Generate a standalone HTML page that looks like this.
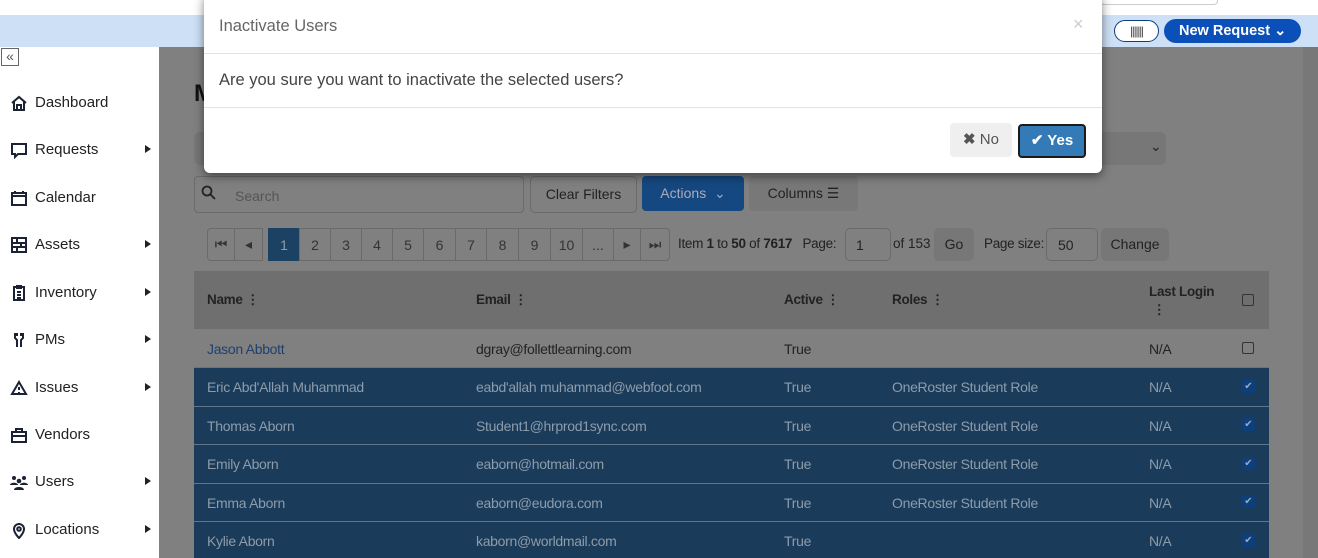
<!DOCTYPE html>
<html><head><style>
*{box-sizing:border-box;margin:0;padding:0}
body{width:1318px;height:558px;overflow:hidden;position:relative;font-family:"Liberation Sans",sans-serif;background:#fff}
.abs{position:absolute}
.side a{position:absolute;left:35px;font-size:15px;color:#222}
.side svg{position:absolute;left:10px;width:18px;height:18px;fill:none;stroke:#1a2233;stroke-width:2}
.side .arr{position:absolute;left:145px;width:0;height:0;border-left:6px solid #222;border-top:4px solid transparent;border-bottom:4px solid transparent}
.main{position:absolute;left:159px;top:47px;width:1159px;height:511px;background:#808080;overflow:hidden}
.pg{position:absolute;top:228px;height:33px;border:1px solid #6a6a6a;background:#808080;font-size:14px;color:#333;display:flex;align-items:center;justify-content:center}
.row{position:absolute;left:194px;width:1075px;font-size:14px;letter-spacing:-0.3px}
.row span{position:absolute}
.sel{background:#1b3b5a;color:#8c9cab;border-top:1px solid #62768a}
.cb{position:absolute;left:1242px;width:12px;height:12px;border:1px solid #333;border-radius:2px}
.cbs{position:absolute;left:1242px;width:13px;height:13px;background:#0d3f7a;border-radius:2px;color:#9ab;font-size:10px;text-align:center;line-height:13px}
</style></head><body>
<div class="abs" style="left:0;top:15px;width:1318px;height:32px;background:#cde0f5"></div>
<div class="abs" style="left:1100px;top:-10px;width:118px;height:15px;border:1px solid #ccc;border-radius:4px;background:#fff"></div>
<div class="abs" style="left:1114px;top:20px;width:45px;height:22px;border:1px solid #0d3f7a;border-radius:11px;background:#fff;font-size:12px;text-align:center;line-height:20px;color:#333;letter-spacing:-1px">||||||</div>
<div class="abs" style="left:1164px;top:19px;width:137px;height:24px;border-radius:12px;background:#0b4fb8;color:#fff;font-weight:bold;font-size:14.5px;line-height:24px;padding-left:15px">New Request &#8964;</div>
<div class="abs" style="left:1px;top:48px;width:18px;height:18px;border:1px solid #666;font-size:14px;line-height:14px;text-align:center;color:#555">«</div>
<div class="side">
<svg style="top:94px" viewBox="0 0 18 18"><path d="M2 9L9 3l7 6M4 8v8h10V8M7 16v-5h4v5"/></svg><a style="top:94px">Dashboard</a>
<svg style="top:141px" viewBox="0 0 18 18"><path d="M2 3h14v10H8l-3 3v-3H2z"/></svg><a style="top:141px">Requests</a><div class="arr" style="top:145px"></div>
<svg style="top:189px" viewBox="0 0 18 18"><path d="M2 4h14v12H2zM2 7h14M5 2v3M13 2v3"/></svg><a style="top:189px">Calendar</a>
<svg style="top:236px" viewBox="0 0 18 18"><path d="M2 2h14v14H2zM2 7h14M2 11h14M7 2v5M11 7v4M7 11v5"/></svg><a style="top:236px">Assets</a><div class="arr" style="top:240px"></div>
<svg style="top:284px" viewBox="0 0 18 18"><path d="M4 3h10v13H4zM7 2h4v2H7zM7 8h4M7 11h4M7 14h4"/></svg><a style="top:284px">Inventory</a><div class="arr" style="top:288px"></div>
<svg style="top:331px" viewBox="0 0 18 18"><path d="M5 2v5l2 2v7M13 2v5l-2 2v7M7 2v3M11 2v3"/></svg><a style="top:331px">PMs</a><div class="arr" style="top:335px"></div>
<svg style="top:379px" viewBox="0 0 18 18"><path d="M9 3L2 15h14zM9 8v3M9 13v1"/></svg><a style="top:379px">Issues</a><div class="arr" style="top:383px"></div>
<svg style="top:426px" viewBox="0 0 18 18"><path d="M2 6h14v10H2zM6 6V3h6v3M2 10h14"/></svg><a style="top:426px">Vendors</a>
<svg style="top:473px;fill:#1a2233;stroke:none" viewBox="0 0 18 18"><circle cx="4" cy="5" r="2"/><circle cx="14" cy="5" r="2"/><circle cx="9" cy="8" r="2.3"/><path d="M0 12c0-3 8-3 8 0zM10 12c0-3 8-3 8 0zM4 17c0-4 10-4 10 0z"/></svg><a style="top:473px">Users</a><div class="arr" style="top:477px"></div>
<svg style="top:521px" viewBox="0 0 18 18"><path d="M9 17s-5-5-5-9a5 5 0 0 1 10 0c0 4-5 9-5 9z"/><circle cx="9" cy="8" r="1.8"/></svg><a style="top:521px">Locations</a><div class="arr" style="top:525px"></div>
</div>
<div class="main"></div>
<div class="abs" style="left:1303px;top:47px;width:15px;height:511px;background:#787878"></div>
<div class="abs" style="left:194px;top:80px;font-size:24px;font-weight:bold;color:#111">M</div>
<div class="abs" style="left:194px;top:132px;width:972px;height:33px;background:#777;border-radius:6px"></div>
<div class="abs" style="left:1150px;top:138px;font-size:14px;color:#222">⌄</div>
<div class="abs" style="left:194px;top:176px;width:330px;height:37px;border:1px solid #6a6a6a;border-radius:4px;font-size:14px;color:#555;padding:11px 0 0 40px">Search</div>
<svg class="abs" style="left:201px;top:185px" width="16" height="16" viewBox="0 0 16 16" fill="none" stroke="#222" stroke-width="1.8"><circle cx="6" cy="6" r="4.5"/><path d="M9.5 9.5L14 14"/></svg>
<div class="abs" style="left:530px;top:176px;width:107px;height:37px;border:1px solid #6a6a6a;border-radius:5px;font-size:14px;color:#222;text-align:center;line-height:35px">Clear Filters</div>
<div class="abs" style="left:642px;top:176px;width:102px;height:35px;background:#154880;border-radius:4px;font-size:14px;color:#aab;text-align:center;line-height:35px">Actions &nbsp;⌄</div>
<div class="abs" style="left:749px;top:176px;width:109px;height:35px;background:#787878;border-radius:4px;font-size:14px;color:#222;text-align:center;line-height:35px">Columns ☰</div>
<div class="pg" style="left:207px;width:28px;border-radius:4px 0 0 4px">⏮</div>
<div class="pg" style="left:234px;width:29px">◂</div>
<div class="pg" style="left:268px;width:32px;background:#1b4263;color:#8c9cab;border-color:#1b4263">1</div>
<div class="pg" style="left:299px;width:32px">2</div><div class="pg" style="left:330px;width:32px">3</div><div class="pg" style="left:361px;width:32px">4</div><div class="pg" style="left:392px;width:32px">5</div><div class="pg" style="left:423px;width:33px">6</div><div class="pg" style="left:455px;width:32px">7</div><div class="pg" style="left:486px;width:33px">8</div><div class="pg" style="left:518px;width:33px">9</div><div class="pg" style="left:550px;width:33px">10</div><div class="pg" style="left:582px;width:32px">...</div><div class="pg" style="left:613px;width:28px">▸</div><div class="pg" style="left:640px;width:30px;border-radius:0 4px 4px 0">⏭</div>
<div class="abs" style="left:678px;top:236px;font-size:13.5px;color:#222;letter-spacing:-0.3px">Item <b>1</b> to <b>50</b> of <b>7617</b> &nbsp; Page:</div>
<div class="abs" style="left:845px;top:228px;width:46px;height:33px;border:1px solid #6a6a6a;border-radius:5px;font-size:14px;color:#222;padding:8px 10px">1</div>
<div class="abs" style="left:893px;top:236px;font-size:13.5px;color:#222">of 153</div>
<div class="abs" style="left:934px;top:228px;width:40px;height:33px;background:#777;border-radius:5px;font-size:14px;color:#222;text-align:center;line-height:33px">Go</div>
<div class="abs" style="left:984px;top:236px;font-size:13.5px;color:#222;letter-spacing:-0.3px">Page size:</div>
<div class="abs" style="left:1046px;top:228px;width:52px;height:33px;border:1px solid #6a6a6a;border-radius:5px;font-size:14px;color:#222;padding:8px 11px">50</div>
<div class="abs" style="left:1101px;top:228px;width:68px;height:33px;background:#777;border-radius:5px;font-size:14px;color:#222;text-align:center;line-height:33px">Change</div>
<div class="row" style="top:271px;height:58px;background:#6f6f6f;font-weight:bold;color:#222;font-size:13.5px">
<span style="left:13px;top:21px">Name ⋮</span><span style="left:282px;top:21px">Email ⋮</span><span style="left:590px;top:21px">Active ⋮</span><span style="left:698px;top:21px">Roles ⋮</span><span style="left:955px;top:12px;line-height:18px">Last Login<br>&nbsp;⋮</span></div>
<div class="cb" style="top:294px"></div>
<div class="row" style="top:329px;height:38px;color:#222"><span style="left:13px;top:12px;color:#1f3f6e">Jason Abbott</span><span style="left:282px;top:12px">dgray@follettlearning.com</span><span style="left:590px;top:12px">True</span><span style="left:955px;top:12px">N/A</span></div>
<div class="cb" style="top:342px"></div>
<div class="row sel" style="top:367px;height:39px"><span style="left:13px;top:11px">Eric Abd'Allah Muhammad</span><span style="left:282px;top:11px">eabd'allah muhammad@webfoot.com</span><span style="left:590px;top:11px">True</span><span style="left:698px;top:11px">OneRoster Student Role</span><span style="left:955px;top:11px">N/A</span></div>
<div class="row sel" style="top:406px;height:38px"><span style="left:13px;top:11px">Thomas Aborn</span><span style="left:282px;top:11px">Student1@hrprod1sync.com</span><span style="left:590px;top:11px">True</span><span style="left:698px;top:11px">OneRoster Student Role</span><span style="left:955px;top:11px">N/A</span></div>
<div class="row sel" style="top:444px;height:39px"><span style="left:13px;top:11px">Emily Aborn</span><span style="left:282px;top:11px">eaborn@hotmail.com</span><span style="left:590px;top:11px">True</span><span style="left:698px;top:11px">OneRoster Student Role</span><span style="left:955px;top:11px">N/A</span></div>
<div class="row sel" style="top:483px;height:38px"><span style="left:13px;top:11px">Emma Aborn</span><span style="left:282px;top:11px">eaborn@eudora.com</span><span style="left:590px;top:11px">True</span><span style="left:698px;top:11px">OneRoster Student Role</span><span style="left:955px;top:11px">N/A</span></div>
<div class="row sel" style="top:521px;height:37px"><span style="left:13px;top:11px">Kylie Aborn</span><span style="left:282px;top:11px">kaborn@worldmail.com</span><span style="left:590px;top:11px">True</span><span style="left:955px;top:11px">N/A</span></div>
<div class="cbs" style="top:380px">✔</div><div class="cbs" style="top:418px">✔</div><div class="cbs" style="top:457px">✔</div><div class="cbs" style="top:495px">✔</div><div class="cbs" style="top:534px">✔</div>
<div class="abs" style="left:204px;top:-6px;width:898px;height:179px;background:#fff;border-radius:6px;box-shadow:0 3px 10px rgba(0,0,0,.5)">
<div class="abs" style="left:15px;top:23px;font-size:16.5px;color:#666">Inactivate Users</div>
<div class="abs" style="left:869px;top:20px;font-size:18px;color:#ccc">×</div>
<div class="abs" style="left:0;top:59px;width:898px;height:1px;background:#e3e3e3"></div>
<div class="abs" style="left:15px;top:77px;font-size:16.5px;color:#444">Are you sure you want to inactivate the selected users?</div>
<div class="abs" style="left:0;top:113px;width:898px;height:1px;background:#e3e3e3"></div>
<div class="abs" style="left:746px;top:129px;width:62px;height:34px;background:#efefef;border-radius:4px;font-size:15px;color:#555;text-align:center;line-height:34px"><b>✖</b> No</div>
<div class="abs" style="left:814px;top:130px;width:68px;height:34px;background:#337ab7;border:2px solid #1a1a1a;border-radius:4px;font-size:15px;color:#fff;text-align:center;line-height:30px;font-weight:bold">✔ Yes</div>
</div>
</body></html>
